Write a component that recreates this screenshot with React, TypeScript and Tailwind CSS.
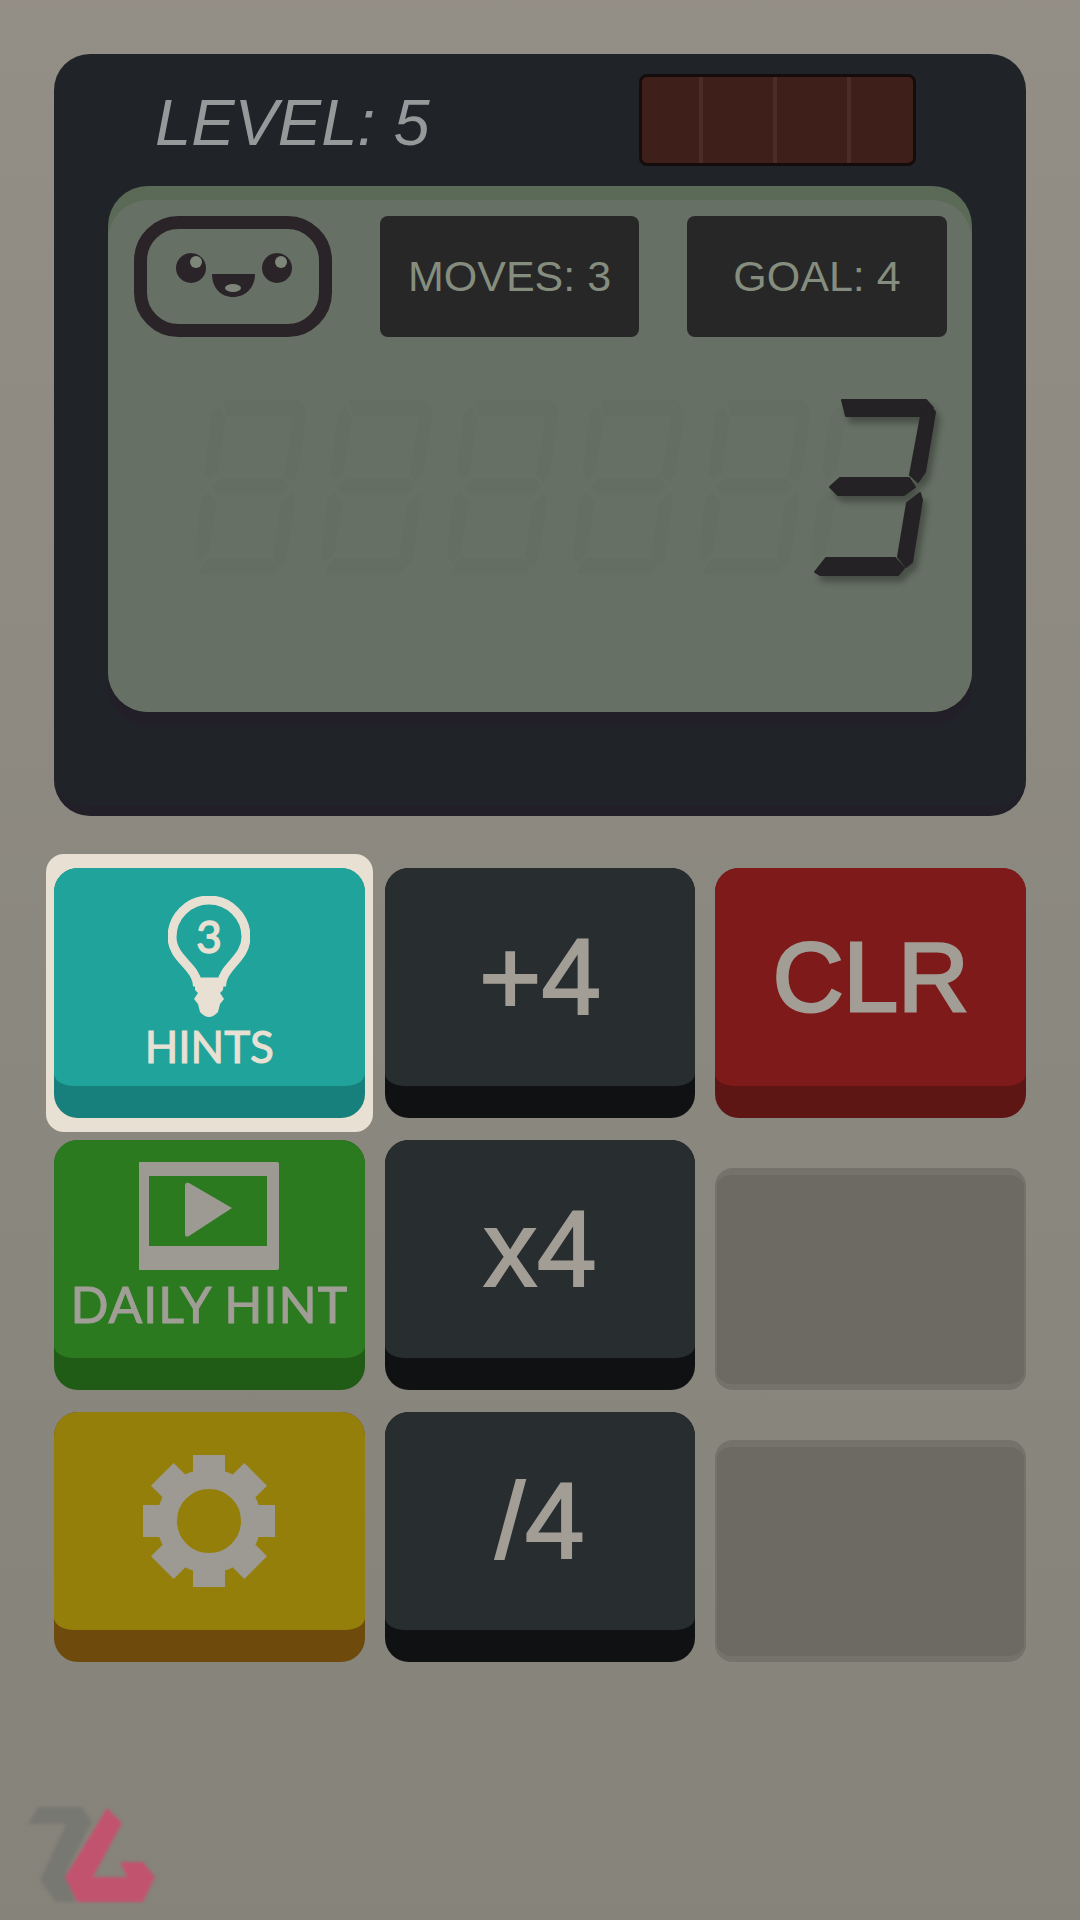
const SANS = "font-['Liberation_Sans',Arial,sans-serif]";

// segments of the right-most digit, in page coordinates
const SEGMENTS = {
  top: '842,400 926,400 933,408 921,416 846,416',
  upperRight: '928,404 935,412 925,472 918,482 910,475 921,416',
  middle: '830,487 840,478 909,478 915,487 904,495 838,495',
  lowerRight: '920,493 922,500 912,562 906,567 898,557 907,503',
  bottom: '815,572 826,558 895,558 904,568 898,575 820,575',
  upperLeft: '838,406 845,418 836,472 828,480 822,474 830,414',
  lowerLeft: '826,492 835,502 826,552 817,562 811,556 818,500',
};

const LIT = [SEGMENTS.top, SEGMENTS.upperRight, SEGMENTS.middle, SEGMENTS.lowerRight, SEGMENTS.bottom];

// the unlit digits are a little narrower than the lit one
const GHOST_OFFSETS = [-535, -409, -283, -157, -31];

function Face() {
  return (
    <svg width="198" height="121" viewBox="134 216 198 121" className="shrink-0">
      <rect x="140.5" y="222.5" width="185" height="108" rx="38" fill="none" stroke="#2a2428" strokeWidth="13" />
      <circle cx="191" cy="268" r="15" fill="#2a2428" />
      <circle cx="277" cy="268" r="15" fill="#2a2428" />
      <circle cx="196" cy="262" r="6" fill="#7d8679" />
      <circle cx="281" cy="262" r="6" fill="#7d8679" />
      <path d="M212 274 H255 C255 288 245 297 233 297 C221 297 212 288 212 274 Z" fill="#2a2428" />
      <ellipse cx="233" cy="288" rx="8" ry="4" fill="#7d8679" />
    </svg>
  );
}

function Readout() {
  return (
    <svg width="864" height="220" viewBox="108 380 864 220" className="mt-[43px] block">
      {GHOST_OFFSETS.map((x) => (
        <g key={x} transform={`translate(${x} 0) scale(0.9 1)`} fill="#646e62">
          {Object.values(SEGMENTS).map((p) => (
            <polygon key={p} points={p} />
          ))}
        </g>
      ))}
      <g fill="#646e62">
        <polygon points={SEGMENTS.upperLeft} />
        <polygon points={SEGMENTS.lowerLeft} />
      </g>
      <g
        fill="#242225"
        stroke="#242225"
        strokeWidth="2"
        strokeLinejoin="round"
        className="drop-shadow-[4px_6px_3px_rgba(0,0,0,0.3)]"
      >
        {LIT.map((p) => (
          <polygon key={p} points={p} />
        ))}
      </g>
    </svg>
  );
}

function StatBox({ label, width }: { label: string; width: string }) {
  return (
    <div className={`${width} h-[121px] shrink-0 rounded-[8px] bg-[#272727] flex items-center justify-center text-[43px] text-[#858d7e] ${SANS}`}>
      {label}
    </div>
  );
}

function Key({
  face,
  side,
  children,
}: {
  face: string;
  side: string;
  children?: React.ReactNode;
}) {
  return (
    <div className={`h-[250px] rounded-[24px] overflow-hidden ${side}`}>
      <div className={`h-[218px] rounded-b-[20px_12px] rounded-t-[20px] ${face} flex flex-col items-center`}>
        {children}
      </div>
    </div>
  );
}

function KeyLabel({ children, size }: { children: string; size: string }) {
  return (
    <div className={`h-full flex items-center justify-center ${size} leading-none text-[#a29e96] ${SANS}`}>
      {children}
    </div>
  );
}

function EmptySlot() {
  return (
    <div className="mt-[28px] h-[222px] rounded-[18px] bg-[#6c6a63] border-[2px] border-t-[7px] border-b-[6px] border-[#74726b]" />
  );
}

function Bulb() {
  return (
    <svg width="82" height="122" viewBox="0 0 82 122" className="mt-[28px] block shrink-0">
      <path
        d="M29 86 C27 70 4 62 4 41 A37 37 0 1 1 78 41 C78 62 56 70 54 86 Z"
        fill="none"
        stroke="#e8e1d3"
        strokeWidth="9"
      />
      <path
        d="M27 84 H56 L55 94 L52 97 L56 103 L52 108 L50 116 Q41 126 32 116 L30 108 L26 103 L30 97 L27 94 Z"
        fill="#e8e1d3"
      />
      <text
        x="41"
        y="57"
        textAnchor="middle"
        fontSize="44"
        fill="#e8e1d3"
        stroke="#e8e1d3"
        strokeWidth="1.5"
        fontFamily="Lato, sans-serif"
      >
        3
      </text>
    </svg>
  );
}

function VideoIcon() {
  return (
    <svg width="140" height="108" viewBox="0 0 140 108" className="mt-[22px] block shrink-0">
      <path fillRule="evenodd" d="M0 0 H138 Q140 0 140 2 V106 Q140 108 138 108 H0 Z M10 14 V84 H128 V14 Z" fill="#9c9a92" />
      <path d="M46 24 Q46 20 50 21 L93 46 L50 74 Q46 76 46 72 Z" fill="#9c9a92" />
    </svg>
  );
}

function Gear() {
  return (
    <svg width="132" height="132" viewBox="-66 -66 132 132" className="mt-[43px] block shrink-0">
      <circle r="42" fill="none" stroke="#9c9a92" strokeWidth="20" />
      {[0, 45, 90, 135, 180, 225, 270, 315].map((a) => (
        <rect key={a} x="-16" y="-66" width="32" height="22" fill="#9c9a92" transform={`rotate(${a})`} />
      ))}
    </svg>
  );
}

function Logo() {
  return (
    <svg width="200" height="140" viewBox="0 0 200 140" className="absolute left-0 bottom-0 blur-[1.5px]">
      <polygon points="28,44 38,27 82,27 92,42 66,92 75,122 56,122 40,100 66,44" fill="#787872" />
      <polygon points="107,28 122,43 93,97 127,97 120,82 143,82 155,97 143,122 77,122 65,97" fill="#c2536f" />
    </svg>
  );
}

export default function App() {
  return (
    <div className="relative w-[1080px] h-[1920px] overflow-hidden pt-[54px] px-[54px] bg-linear-to-b from-[#938e86] via-[#8b8880] to-[#86837a]">
      {/* calculator body */}
      <div className="h-[762px] rounded-[36px] bg-[#202428] border-b-[10px] border-[#221f28] px-[54px]">
        <div className="h-[132px] flex items-center justify-between pl-[47px] pr-[56px]">
          <span className={`text-[65px] italic text-[#96989a] leading-none mt-[4px] ${SANS}`}>LEVEL: 5</span>
          <div className="w-[277px] h-[92px] rounded-[8px] border-[3px] border-[#140d0c] bg-[#3e1f1a] flex pl-[57px] gap-[70px]">
            <div className="w-[4px] bg-[#4b2d28]" />
            <div className="w-[4px] bg-[#4b2d28]" />
            <div className="w-[4px] bg-[#4b2d28]" />
          </div>
        </div>

        {/* lcd */}
        <div className="h-[526px] rounded-[40px] bg-[#5b6a57] pt-[14px] shadow-[0_13px_0_#221f28]">
          <div className="h-full rounded-[40px] bg-[#667064] px-[26px] pt-[16px]">
            <div className="flex gap-[48px]">
              <Face />
              <StatBox label="MOVES: 3" width="w-[259px]" />
              <StatBox label="GOAL: 4" width="w-[260px]" />
            </div>
            <div className="ml-[-26px]">
              <Readout />
            </div>
          </div>
        </div>
      </div>

      {/* keypad */}
      <div className="mt-[52px] grid grid-cols-3 gap-x-[20px] gap-y-[22px]">
        <div className="relative">
          <div className="absolute -inset-x-[8px] -inset-y-[14px] rounded-[18px] bg-[#e8e1d3]" />
          <div className="relative">
            <Key face="bg-[#20a39b]" side="bg-[#17807c]">
              <Bulb />
              <span className="text-[44px] leading-[56px] text-[#e8e1d3] [-webkit-text-stroke:1px_#e8e1d3] font-['Lato',sans-serif]">HINTS</span>
            </Key>
          </div>
        </div>
        <Key face="bg-[#282d30]" side="bg-[#0f1112]">
          <KeyLabel size="text-[107px] [-webkit-text-stroke:2px_#a29e96]">+4</KeyLabel>
        </Key>
        <Key face="bg-[#7f1a1a]" side="bg-[#5d1614]">
          <KeyLabel size="text-[98px] [-webkit-text-stroke:3px_#a29e96]">CLR</KeyLabel>
        </Key>

        <Key face="bg-[#2c7a20]" side="bg-[#215c16]">
          <VideoIcon />
          <span className="mt-[6px] text-[50px] leading-[56px] tracking-[1px] text-[#a09e96] [-webkit-text-stroke:1px_#a09e96] font-['Lato',sans-serif]">DAILY HINT</span>
        </Key>
        <Key face="bg-[#282d30]" side="bg-[#0f1112]">
          <KeyLabel size="text-[107px] [-webkit-text-stroke:2px_#a29e96]">x4</KeyLabel>
        </Key>
        <EmptySlot />

        <Key face="bg-[#957f0b]" side="bg-[#6e4a0c]">
          <Gear />
        </Key>
        <Key face="bg-[#282d30]" side="bg-[#0f1112]">
          <KeyLabel size="text-[107px] [-webkit-text-stroke:2px_#a29e96]">/4</KeyLabel>
        </Key>
        <EmptySlot />
      </div>

      <Logo />
    </div>
  );
}
